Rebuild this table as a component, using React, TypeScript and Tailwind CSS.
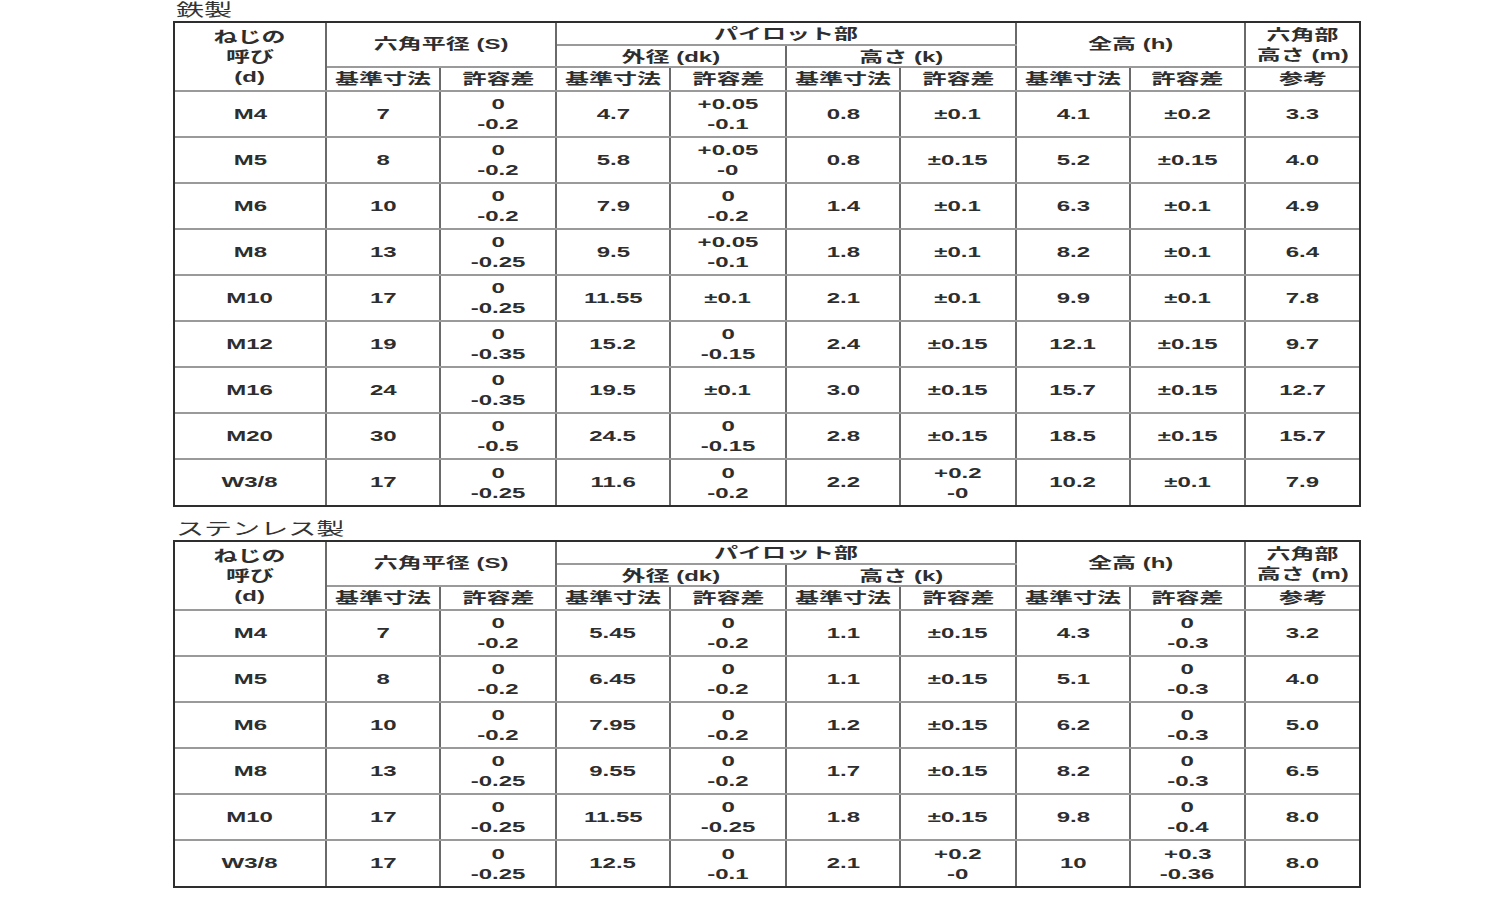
import React from "react";

type Cell = string | [string, string];

const FONT = { fontFamily: '"Liberation Sans", "Noto Sans CJK JP", sans-serif' };

const iron: Cell[][] = [
  ["M4", "7", ["0", "-0.2"], "4.7", ["+0.05", "-0.1"], "0.8", "±0.1", "4.1", "±0.2", "3.3"],
  ["M5", "8", ["0", "-0.2"], "5.8", ["+0.05", "-0"], "0.8", "±0.15", "5.2", "±0.15", "4.0"],
  ["M6", "10", ["0", "-0.2"], "7.9", ["0", "-0.2"], "1.4", "±0.1", "6.3", "±0.1", "4.9"],
  ["M8", "13", ["0", "-0.25"], "9.5", ["+0.05", "-0.1"], "1.8", "±0.1", "8.2", "±0.1", "6.4"],
  ["M10", "17", ["0", "-0.25"], "11.55", "±0.1", "2.1", "±0.1", "9.9", "±0.1", "7.8"],
  ["M12", "19", ["0", "-0.35"], "15.2", ["0", "-0.15"], "2.4", "±0.15", "12.1", "±0.15", "9.7"],
  ["M16", "24", ["0", "-0.35"], "19.5", "±0.1", "3.0", "±0.15", "15.7", "±0.15", "12.7"],
  ["M20", "30", ["0", "-0.5"], "24.5", ["0", "-0.15"], "2.8", "±0.15", "18.5", "±0.15", "15.7"],
  ["W3/8", "17", ["0", "-0.25"], "11.6", ["0", "-0.2"], "2.2", ["+0.2", "-0"], "10.2", "±0.1", "7.9"],
];

const stainless: Cell[][] = [
  ["M4", "7", ["0", "-0.2"], "5.45", ["0", "-0.2"], "1.1", "±0.15", "4.3", ["0", "-0.3"], "3.2"],
  ["M5", "8", ["0", "-0.2"], "6.45", ["0", "-0.2"], "1.1", "±0.15", "5.1", ["0", "-0.3"], "4.0"],
  ["M6", "10", ["0", "-0.2"], "7.95", ["0", "-0.2"], "1.2", "±0.15", "6.2", ["0", "-0.3"], "5.0"],
  ["M8", "13", ["0", "-0.25"], "9.55", ["0", "-0.2"], "1.7", "±0.15", "8.2", ["0", "-0.3"], "6.5"],
  ["M10", "17", ["0", "-0.25"], "11.55", ["0", "-0.25"], "1.8", "±0.15", "9.8", ["0", "-0.4"], "8.0"],
  ["W3/8", "17", ["0", "-0.25"], "12.5", ["0", "-0.1"], "2.1", ["+0.2", "-0"], "10", ["+0.3", "-0.36"], "8.0"],
];

const widths = [151, 114, 116, 114, 116, 114, 116, 114, 115, 114];

const tdBase =
  "border-2 border-y-[#9a9a9a] border-x-[#6a6a6a] text-center align-middle p-0";

function S({ children }: { children: React.ReactNode }) {
  return <span className="inline-block scale-x-[1.6] whitespace-nowrap">{children}</span>;
}

function Lines({ lines }: { lines: string[] }) {
  return (
    <div className="flex flex-col items-center leading-[20px]">
      {lines.map((l, i) => (
        <S key={i}>{l}</S>
      ))}
    </div>
  );
}

function Table({ rows }: { rows: Cell[][] }) {
  const sub = ["基準寸法", "許容差", "基準寸法", "許容差", "基準寸法", "許容差", "基準寸法", "許容差", "参考"];
  return (
    <div className="border-2 border-[#2e2e2e] w-[1188px]">
      <table className="table-fixed border-collapse border-hidden w-[1184px] text-[15px] font-bold text-[#2e2e2e]">
        <colgroup>
          {widths.map((w, i) => (
            <col key={i} style={{ width: w }} />
          ))}
        </colgroup>
        <tbody>
          <tr className="h-[22px]">
            <td rowSpan={3} className={tdBase}>
              <Lines lines={["ねじの", "呼び", "(d)"]} />
            </td>
            <td rowSpan={2} colSpan={2} className={tdBase}>
              <S>六角平径 (S)</S>
            </td>
            <td colSpan={4} className={tdBase + " leading-[19px]"}>
              <S>パイロット部</S>
            </td>
            <td rowSpan={2} colSpan={2} className={tdBase}>
              <S>全高 (h)</S>
            </td>
            <td rowSpan={2} className={tdBase}>
              <Lines lines={["六角部", "高さ (m)"]} />
            </td>
          </tr>
          <tr className="h-[22px]">
            <td colSpan={2} className={tdBase + " leading-[19px]"}>
              <S>外径 (dk)</S>
            </td>
            <td colSpan={2} className={tdBase + " leading-[19px]"}>
              <S>高さ (k)</S>
            </td>
          </tr>
          <tr className="h-[24px]">
            {sub.map((s, i) => (
              <td key={i} className={tdBase + " leading-[20px]"}>
                <S>{s}</S>
              </td>
            ))}
          </tr>
          {rows.map((r, ri) => (
            <tr key={ri} className="h-[46px]">
              {r.map((c, ci) => (
                <td key={ci} className={tdBase}>
                  {Array.isArray(c) ? <Lines lines={c} /> : <S>{c}</S>}
                </td>
              ))}
            </tr>
          ))}
        </tbody>
      </table>
    </div>
  );
}

function Title({ text, h }: { text: string; h: string }) {
  return (
    <div className={"flex items-end pl-[3px] " + h}>
      <span className="inline-block origin-left scale-x-[1.65] text-[17px] leading-[20px] text-[#333] whitespace-nowrap">
        {text}
      </span>
    </div>
  );
}

export default function App() {
  return (
    <div className="w-[1500px] h-[900px] bg-white overflow-hidden" style={FONT}>
      <div className="ml-[173px] flex flex-col">
        <Title text="鉄製" h="h-[21px]" />
        <Table rows={iron} />
        <Title text="ステンレス製" h="h-[33px]" />
        <Table rows={stainless} />
      </div>
    </div>
  );
}
